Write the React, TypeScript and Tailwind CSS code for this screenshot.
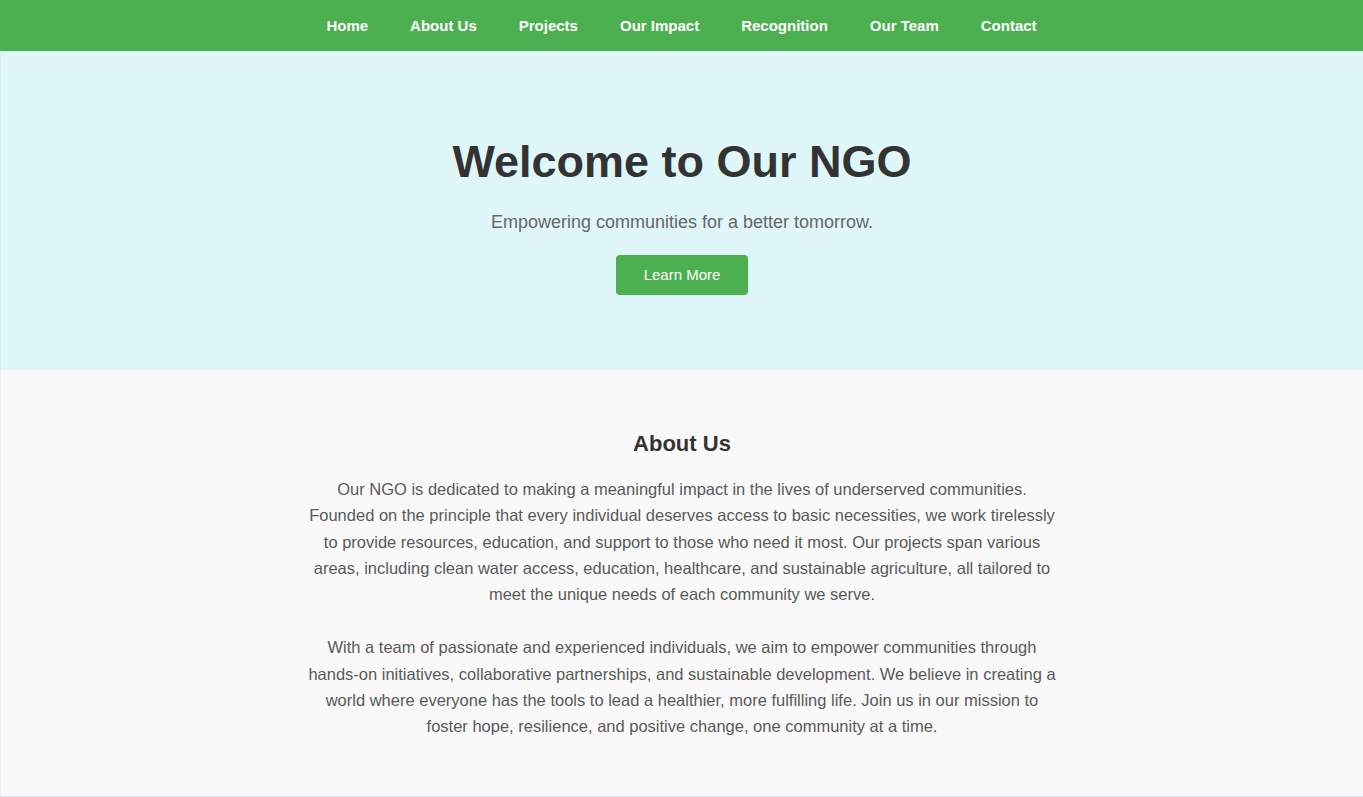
import React from "react";

const navLinks = ["Home", "About Us", "Projects", "Our Impact", "Recognition", "Our Team", "Contact"];

function App() {
  return (
    <div className="min-h-screen bg-[#f9f9f9] font-['Liberation_Sans',Arial,sans-serif]">
      <nav className="bg-[#4caf50] h-[51px] flex items-center justify-center">
        <ul className="flex gap-[42px]">
          {navLinks.map((link) => (
            <li key={link}>
              <a href="#" className="text-white font-bold text-[15px] leading-[18px]">
                {link}
              </a>
            </li>
          ))}
        </ul>
      </nav>

      <section className="bg-[#e0f7fa] border-l border-black/[0.04] h-[319px] pt-[85px] flex flex-col items-center text-center">
        <h1 className="text-[45px] leading-[52px] font-bold text-[#333]">Welcome to Our NGO</h1>
        <p className="mt-[24px] text-[18px] leading-[21px] text-[#666]">
          Empowering communities for a better tomorrow.
        </p>
        <button className="mt-[22px] h-10 px-[28px] bg-[#4caf50] text-white text-[15px] rounded-[4px]">
          Learn More
        </button>
      </section>

      <section className="bg-[#f9f9f9] border-l border-black/[0.04] pt-[61px] pb-[57px]">
        <div className="max-w-[750px] mx-auto text-center">
          <h2 className="text-[22px] leading-[26px] font-bold text-[#333]">About Us</h2>
          <p className="mt-[19px] text-[16.5px] leading-[26.25px] text-[#595959]">
            Our NGO is dedicated to making a meaningful impact in the lives of underserved communities.
            Founded on the principle that every individual deserves access to basic necessities, we work
            tirelessly to provide resources, education, and support to those who need it most. Our projects
            span various areas, including clean water access, education, healthcare, and sustainable
            agriculture, all tailored to meet the unique needs of each community we serve.
          </p>
          <p className="mt-[27px] text-[16.5px] leading-[26.25px] text-[#595959]">
            With a team of passionate and experienced individuals, we aim to empower communities through
            hands-on initiatives, collaborative partnerships, and sustainable development. We believe in
            creating a world where everyone has the tools to lead a healthier, more fulfilling life. Join us
            in our mission to foster hope, resilience, and positive change, one community at a time.
          </p>
        </div>
      </section>

      <section className="bg-[#e0f7fa] border-t border-[#cde5e8] h-[200px]" />
    </div>
  );
}

export default App;
